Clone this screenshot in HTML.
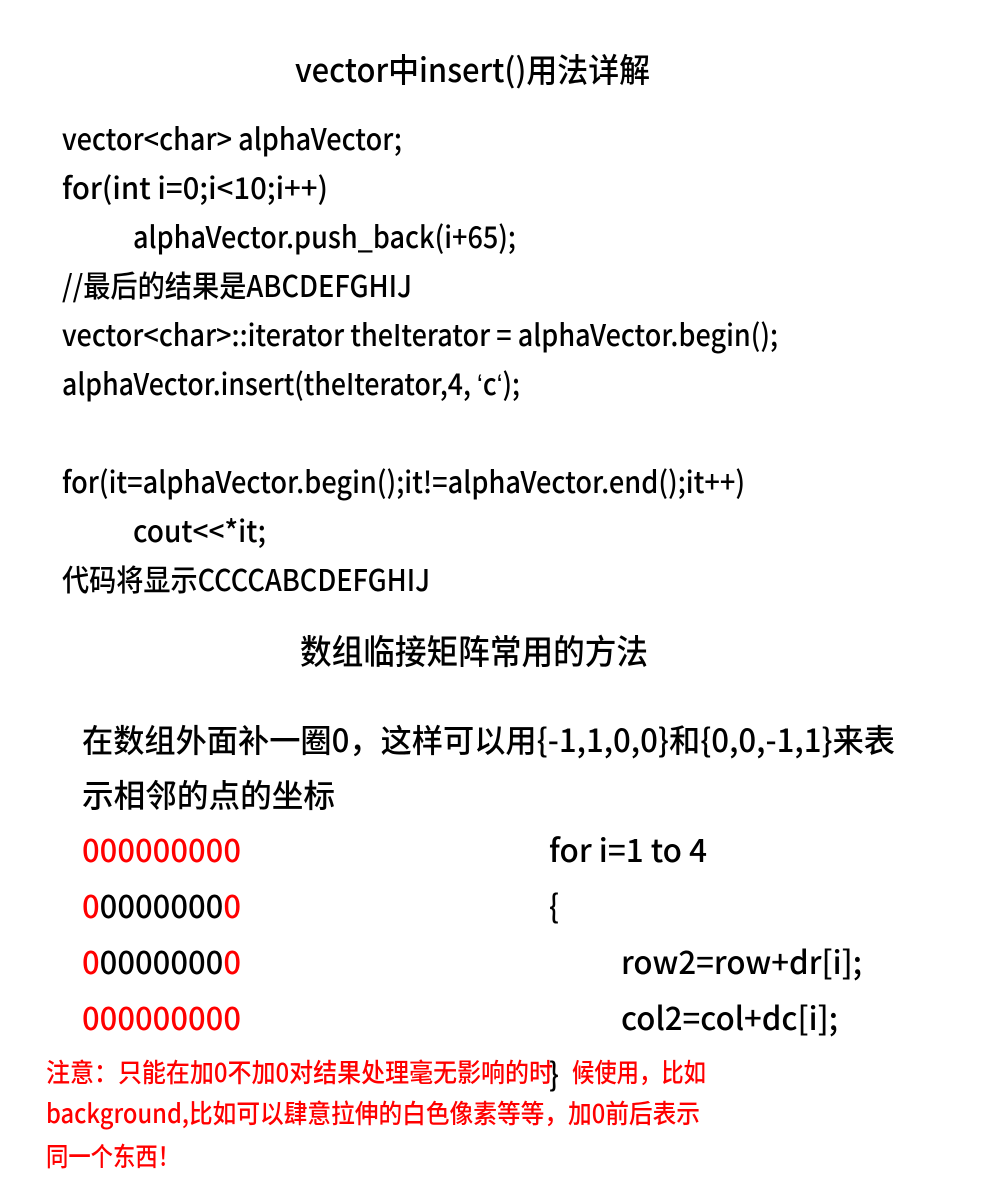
<!DOCTYPE html>
<html><head><meta charset="utf-8">
<style>
html,body{margin:0;padding:0;background:#fff;}
body{width:986px;height:1194px;position:relative;overflow:hidden;font-family:"Liberation Sans","Noto Sans CJK SC",sans-serif;}
.t{position:absolute;white-space:nowrap;color:#000;margin-top:-2px;}
.t span{display:inline-block;transform-origin:0 50%;font-family:"Noto Sans CJK SC",sans-serif;font-weight:500;}
.t span i{font-style:normal;font-family:"Liberation Sans",sans-serif;}
.r{color:#f00;}
b{font-weight:500;}
</style></head><body>
<div class="t" style="left:295px;top:53px;width:355px;font-size:33px;line-height:34px"><span>vector中insert()用法详解</span></div>

<div class="t" style="left:62px;top:124px;width:340px;font-size:30px;line-height:30px"><span>vector&lt;char&gt; alphaVector;</span></div>
<div class="t" style="left:62px;top:173px;width:266px;font-size:30px;line-height:30px"><span>for(int i=0;i&lt;10;i++)</span></div>
<div class="t" style="left:133px;top:222px;width:383px;font-size:30px;line-height:30px"><span>alphaVector.push_back(i+65);</span></div>
<div class="t" style="left:62px;top:271px;width:350px;font-size:30px;line-height:30px"><span>//最后的结果是ABCDEFGHIJ</span></div>
<div class="t" style="left:62px;top:320px;width:716px;font-size:30px;line-height:30px"><span>vector&lt;char&gt;::iterator theIterator = alphaVector.begin();</span></div>
<div class="t" style="left:62px;top:369px;width:458px;font-size:30px;line-height:30px"><span>alphaVector.insert(theIterator,4, <i>‘</i>c<i>‘</i>);</span></div>
<div class="t" style="left:62px;top:467px;width:683px;font-size:30px;line-height:30px"><span>for(it=alphaVector.begin();it!=alphaVector.end();it++)</span></div>
<div class="t" style="left:133px;top:516px;width:133px;font-size:30px;line-height:30px"><span>cout&lt;&lt;*it;</span></div>
<div class="t" style="left:62px;top:565px;width:368px;font-size:30px;line-height:30px"><span>代码将显示CCCCABCDEFGHIJ</span></div>

<div class="t" style="left:300px;top:635px;width:348px;font-size:34px;line-height:34px"><span>数组临接矩阵常用的方法</span></div>

<div class="t" style="left:82px;top:725px;width:813px;font-size:32px;line-height:32px"><span>在数组外面补一圈0，这样可以用{-1,1,0,0}和{0,0,-1,1}来表</span></div>
<div class="t" style="left:82px;top:780px;width:253px;font-size:32px;line-height:32px"><span>示相邻的点的坐标</span></div>

<div class="t r" style="left:82px;top:835px;width:159px;font-size:32px;line-height:32px"><span>000000000</span></div>
<div class="t" style="left:82px;top:891px;width:159px;font-size:32px;line-height:32px"><span><b class="r">0</b>0000000<b class="r">0</b></span></div>
<div class="t" style="left:82px;top:947px;width:159px;font-size:32px;line-height:32px"><span><b class="r">0</b>0000000<b class="r">0</b></span></div>
<div class="t r" style="left:82px;top:1003px;width:159px;font-size:32px;line-height:32px"><span>000000000</span></div>

<div class="t" style="left:549px;top:835px;width:158px;font-size:32px;line-height:32px"><span>for i=1 to 4</span></div>
<div class="t" style="left:549px;top:891px;width:10px;font-size:32px;line-height:32px"><span>{</span></div>
<div class="t" style="left:621px;top:947px;width:241px;font-size:32px;line-height:32px"><span>row2=row+dr[i];</span></div>
<div class="t" style="left:621px;top:1003px;width:217px;font-size:32px;line-height:32px"><span>col2=col+dc[i];</span></div>
<div class="t" style="left:549px;top:1059px;width:10px;font-size:32px;line-height:32px"><span>}</span></div>

<div class="t r" style="left:46px;top:1061px;width:507px;font-size:26px;line-height:26px"><span>注意：只能在加0不加0对结果处理毫无影响的时</span></div>
<div class="t r" style="left:572px;top:1061px;width:134px;font-size:26px;line-height:26px"><span>候使用，比如</span></div>
<div class="t r" style="left:46px;top:1102px;width:654px;font-size:26px;line-height:26px"><span>background,比如可以肆意拉伸的白色像素等等，加0前后表示</span></div>
<div class="t r" style="left:46px;top:1145px;width:134px;font-size:26px;line-height:26px"><span>同一个东西！</span></div>

<script>
document.querySelectorAll('.t').forEach(function(d){
  var s=d.querySelector('span');
  var target=parseFloat(d.style.width);
  var w=s.getBoundingClientRect().width;
  if(w>0) s.style.transform='scaleX('+(target/w)+')';
});
</script>
</body></html>
